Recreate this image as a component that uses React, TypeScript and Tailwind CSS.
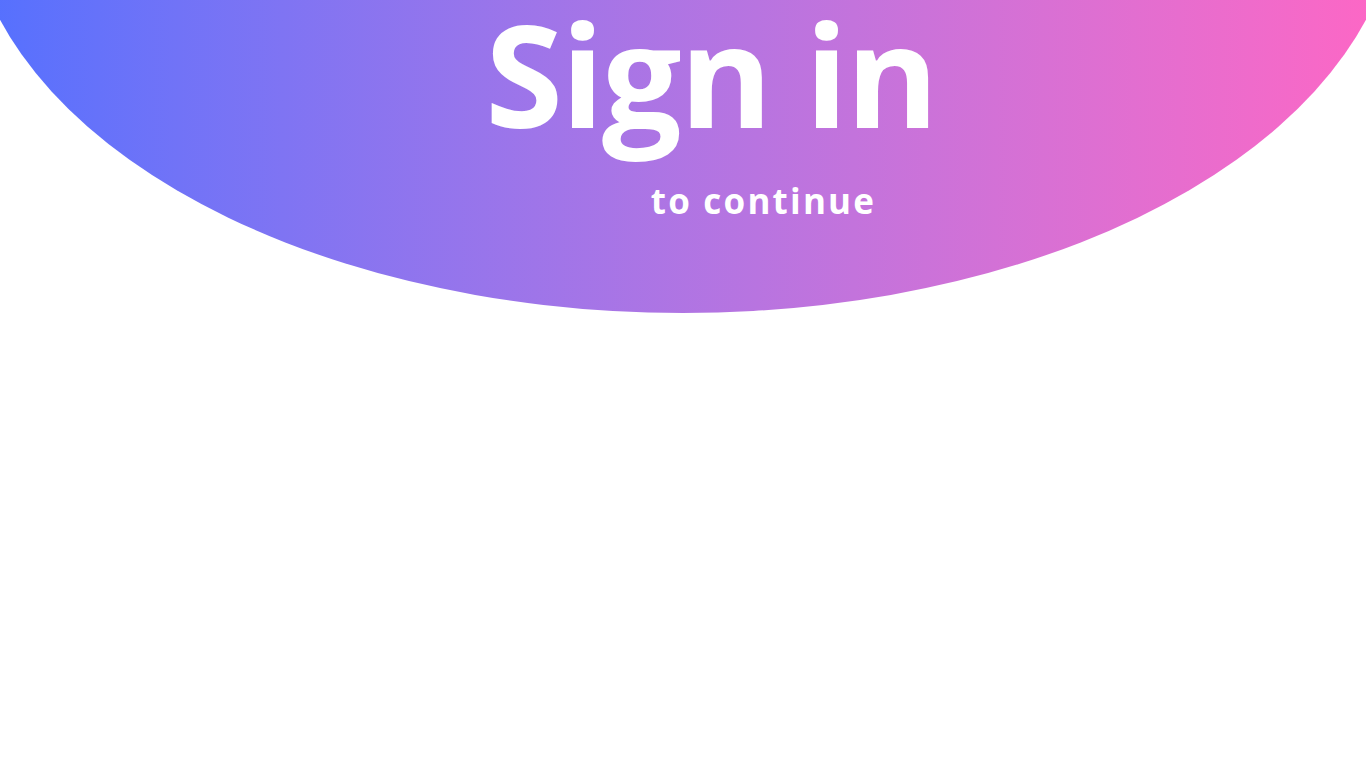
export default function App() {
  return (
    <div className="relative w-full h-screen overflow-hidden bg-white font-['Open_Sans',_'Noto_Sans',_sans-serif]">
      {/* gradient ellipse header */}
      <div className="w-[1432px] h-[838px] -mt-[525px] -ml-[33px] rounded-[50%] bg-gradient-to-r from-[#5170ff] to-[#ff66c4] pt-[528px] flex flex-col items-center text-white font-bold">
        <h1 className="pl-[56px] text-[141px] leading-none tracking-[-2px]">Sign in</h1>
        <p className="pl-[161px] mt-[39px] text-[35px] leading-none tracking-[2.2px]">to continue</p>
      </div>
    </div>
  )
}
